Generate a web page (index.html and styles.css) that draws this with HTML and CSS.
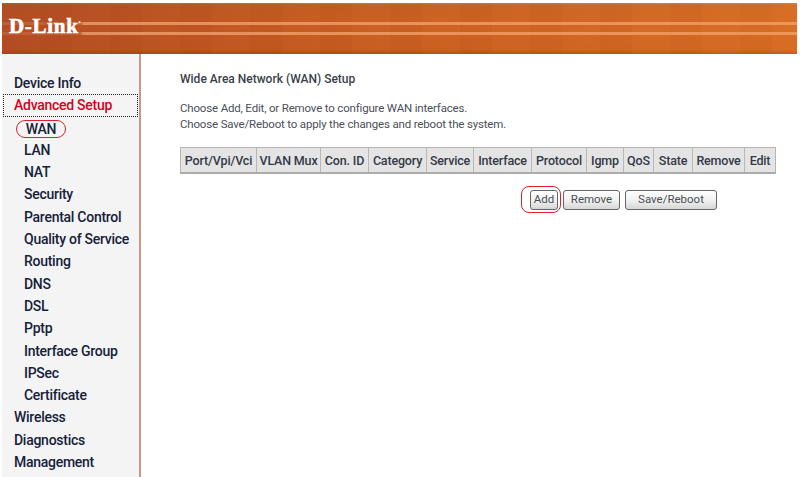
FILE: index.html
```html
<!DOCTYPE html>
<html lang="en">
<head>
<meta charset="utf-8">
<title>Wide Area Network (WAN) Setup</title>
<link rel="stylesheet" href="styles.css">
</head>
<body>
<div class="page">
  <header class="banner">
    <div class="stripe stripe-one"></div>
    <div class="stripe stripe-two"></div>
    <div class="logo">D-Link<sup class="tm">.</sup></div>
  </header>
  <div class="main">
    <nav class="side">
      <a class="item">Device Info</a>
      <a class="item active">Advanced Setup</a>
      <a class="item sub"><span class="wan">WAN</span></a>
      <a class="item sub">LAN</a>
      <a class="item sub">NAT</a>
      <a class="item sub">Security</a>
      <a class="item sub">Parental Control</a>
      <a class="item sub">Quality of Service</a>
      <a class="item sub">Routing</a>
      <a class="item sub">DNS</a>
      <a class="item sub">DSL</a>
      <a class="item sub">Pptp</a>
      <a class="item sub">Interface Group</a>
      <a class="item sub">IPSec</a>
      <a class="item sub">Certificate</a>
      <a class="item">Wireless</a>
      <a class="item">Diagnostics</a>
      <a class="item">Management</a>
    </nav>
    <main class="content">
      <h1 class="title">Wide Area Network (WAN) Setup</h1>
      <p class="intro">Choose Add, Edit, or Remove to configure WAN interfaces.<br>Choose Save/Reboot to apply the changes and reboot the system.</p>
      <table class="wan-table">
        <tr>
          <th>Port/Vpi/Vci</th><th>VLAN Mux</th><th>Con. ID</th><th>Category</th><th>Service</th><th>Interface</th><th>Protocol</th><th>Igmp</th><th>QoS</th><th>State</th><th>Remove</th><th>Edit</th>
        </tr>
      </table>
      <div class="actions">
        <span class="ring"><button class="btn btn-add">Add</button></span>
        <button class="btn btn-remove">Remove</button>
        <button class="btn btn-save">Save/Reboot</button>
      </div>
    </main>
  </div>
</div>
</body>
</html>
```
FILE: styles.css
```css
* { box-sizing: border-box; }
html, body { margin: 0; height: 100%; background: #fff; }
body { overflow: hidden; font-family: Roboto, "Noto Sans", sans-serif; }
.page { padding: 3px 3px 0 2px; height: 477px; display: flex; flex-direction: column; }
.banner {
  height: 51px; position: relative; flex: none; overflow: hidden;
  display: flex; align-items: center; padding: 0 0 3px 7px;
  background:
    repeating-linear-gradient(90deg, rgba(255,170,90,.035) 0 38px, rgba(120,40,0,.035) 38px 70px),
    linear-gradient(180deg, #c08a5c 0, #c96322 4%, #cf6423 50%, #cb6020 92%, #a8481a 100%);
}
.banner::after {
  content: ""; position: absolute; inset: 0;
  background: linear-gradient(90deg, rgba(160,60,35,.6) 0, rgba(190,80,30,.3) 45%, rgba(235,125,40,.35) 100%);
}
.stripe {
  position: absolute; left: 0; right: 0; height: 3px; z-index: 1;
  background: linear-gradient(90deg, rgba(230,150,110,.25) 0, rgba(230,150,110,.25) 78px, rgba(240,165,115,.75) 82px, rgba(243,160,100,.8) 100%);
}
.stripe-one { top: 19px; }
.stripe-two { top: 29px; }
.logo {
  position: relative; z-index: 2; color: #fff; font: 700 21px/1 "Liberation Serif", serif;
  -webkit-text-stroke: .6px #fff; letter-spacing: .7px; margin-top: -1px;
}
.tm { font-size: 8px; line-height: 0; vertical-align: 10px; }
.main { flex: 1; display: flex; min-height: 0; }
.side {
  width: 139px; flex: none; background: #f4f4f4; border-right: 2px solid #c99a83;
  padding: 18px 0 0 0; display: flex; flex-direction: column;
}
.item {
  height: 22.3px; line-height: 22px; padding-left: 12px; flex: none;
  font-size: 14px; font-weight: 500; color: #16213a; white-space: nowrap; letter-spacing: -.27px;
}
.item.sub { padding-left: 22px; }
.item.active { color: #d6001c; outline: 1px dotted #222; outline-offset: -1px; margin: 0 1px; padding-left: 11px; }
.wan {
  display: inline-block; height: 18px; line-height: 16px; width: 50px; margin-left: -8px;
  text-align: center; border: 1px solid #d8202e; border-radius: 9px; vertical-align: -1px;
}
.content { flex: 1; padding: 18px 0 0 39px; color: #3b3f46; }
.title { margin: 0; font-size: 12px; line-height: 15px; font-weight: 500; color: #3a3f4a; }
.intro { margin: 14px 0 0; line-height: 15.5px; font-size: 11.5px; letter-spacing: -.17px; color: #4b5058; }
.wan-table {
  border-collapse: separate; border-spacing: 0; margin-top: 15px; background: #e4e4e4;
  border: 1px solid #b4b4b4; border-bottom: 2px solid #aaa; width: 596px; height: 27px; table-layout: fixed;
}
.wan-table th {
  padding: 0; font-size: 12.5px; font-weight: 500; letter-spacing: -.17px; color: #333a46; white-space: nowrap;
  border-right: 1px solid #b8b8b8; text-align: center; overflow: hidden;
}
.wan-table th:last-child { border-right: 0; }
.wan-table th:nth-child(1) { width: 76px; }
.wan-table th:nth-child(2) { width: 64px; }
.wan-table th:nth-child(3) { width: 48px; }
.wan-table th:nth-child(4) { width: 58px; }
.wan-table th:nth-child(5) { width: 47px; }
.wan-table th:nth-child(6) { width: 58px; }
.wan-table th:nth-child(7) { width: 55px; }
.wan-table th:nth-child(8) { width: 37px; }
.wan-table th:nth-child(9) { width: 30px; }
.wan-table th:nth-child(10) { width: 39px; }
.wan-table th:nth-child(11) { width: 52px; }
.actions { display: flex; align-items: center; margin: 12px 0 0 341px; }
.ring {
  display: flex; align-items: center; justify-content: flex-end; width: 40px; height: 27px; padding-right: 2px;
  border: 1px solid #e0202e; border-radius: 8px;
}
.btn {
  font: 11.5px/1 Roboto, "Noto Sans", sans-serif; color: #4a4f55; height: 20px; padding: 0;
  border: 1px solid #666; border-radius: 3px;
  background: linear-gradient(180deg, #fff 0, #f0f0f0 55%, #d6d6d6 100%);
}
.btn-add { width: 28px; }
.btn-remove { width: 57px; margin-left: 2px; }
.btn-save { width: 92px; margin-left: 5px; }
```
